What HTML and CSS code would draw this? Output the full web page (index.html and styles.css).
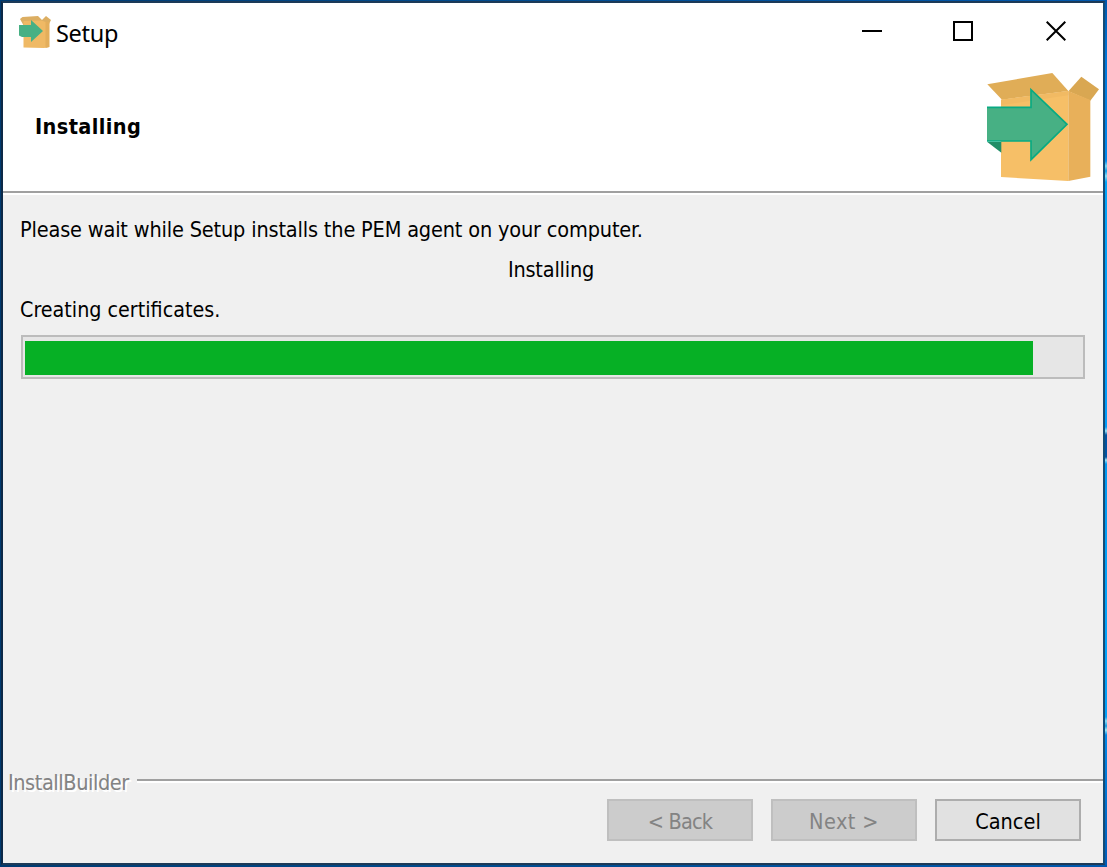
FILE: index.html
```html
<!DOCTYPE html>
<html lang="en">
<head>
<meta charset="utf-8">
<title>Setup</title>
<link rel="stylesheet" href="styles.css">
</head>
<body>
<div class="desktop">
  <main class="window">
    <header class="header">
      <div class="titlebar">
        <svg class="app-icon" viewBox="0 0 32 33">
          <path fill="#dcae62" d="M1 4 3.500 2 19 1 23 5 27 1 32 5 30 9V13H6z"/>
          <path fill="#efb965" d="M4.500 6 22 5.500 30 8V32L25 33 4.500 32.500z"/>
          <path fill="#e3ae5b" d="M26.500 6 30.500 7.500V32L26.500 33z"/>
          <path fill="#47b084" d="M0 10H12V5L24 16 12 27V22H3L0 20.500z"/>
        </svg>
        <span class="caption">Setup</span>
        <svg class="control minimize" viewBox="0 0 20 20"><path d="M0 10H20"/></svg>
        <svg class="control maximize" viewBox="0 0 20 20"><path d="M1 1H19V19H1z"/></svg>
        <svg class="control close" viewBox="0 0 20 20"><path d="M.7 .7 19.3 19.3M19.3 .7 .7 19.3"/></svg>
      </div>
      <div class="banner">
        <h1 class="heading">Installing</h1>
        <svg class="logo" viewBox="60 36 336 330" preserveAspectRatio="none">
          <path fill="#d9a752" d="M304 94 343 50 396 88 370 122z"/>
          <path fill="#f6bf67" d="M102 119 304 93V363L102 351z"/>
          <path fill="#e0ad57" d="M61 73 256 39 304 93 105 119z"/>
          <path fill="#f1ba63" d="M102 119 304 93V106L102 136z"/>
          <path fill="#e8b05a" d="M304 93 370 120V350L304 363z"/>
          <path fill="#208e68" d="M61 246H103V278z"/>
          <path fill="#47b084" d="M60 142H192V89L300 193 192 299V243H60z"/>
          <path fill="none" stroke="#08aa83" stroke-width="5" d="M60 142H192V89L300 193 192 299V243H60"/>
        </svg>
      </div>
    </header>
    <section class="content">
      <p class="line message">Please wait while Setup installs the PEM agent on your computer.</p>
      <p class="line stage">Installing</p>
      <p class="line task">Creating certificates.</p>
      <div class="progress"><div class="bar"></div></div>
    </section>
    <footer class="footer">
      <div class="divider"><span class="brand">InstallBuilder</span><span class="rule"></span></div>
      <div class="buttons">
        <button class="button" disabled><span class="back">&lt; Back</span></button>
        <button class="button" disabled><span class="next">Next &gt;</span></button>
        <button class="button"><span class="cancel">Cancel</span></button>
      </div>
    </footer>
  </main>
  <div class="edge"></div>
</div>
</body>
</html>
```
FILE: styles.css
```css
* { box-sizing: border-box; }
body {
  margin: 0;
  font-family: "DejaVu Sans Condensed", "DejaVu Sans", sans-serif;
  font-stretch: condensed;
  font-size: 21.5px;
  color: #000;
}
.desktop {
  display: flex;
  width: 1107px;
  height: 867px;
  padding: 1px 0 2px 1px;
  background: linear-gradient(90deg, #003a70, #004a8c 40%, #0058ae);
}
.window {
  display: flex;
  flex-direction: column;
  width: 1104px;
  height: 864px;
  border: 2px solid #1c3a58;
  border-left-color: #0c2947;
  border-right-color: #144b76;
  background: #f0f0f0;
}
.edge {
  width: 2px;
  height: 864px;
  background: linear-gradient(180deg, #0058ac 0, #0078dc 60px, #008aee 160px, #7cdcf8 165px, #0a9cec 170px, #8ce2fa 175px, #00a4f8 181px, #009cfa 426px, #9ce4fa 430px, #0054a4 434px, #0054a4 456px, #9ce4fa 459px, #0098f0 463px, #00a4fa 600px, #00a0f8 716px, #8cdef8 720px, #149ce4 725px, #9ceafa 729px, #0088e8 734px, #005cb8 864px);
}
.header {
  height: 190px;
  background: #fff;
  border-bottom: 2px solid #a0a0a0;
  box-shadow: 0 2px #fff;
}
.titlebar {
  display: flex;
  height: 57px;
  padding: 0 37px 0 16px;
}
.app-icon { width: 32px; height: 33px; margin-top: 12px; }
.caption {
  margin: 12px auto 0 5px;
  font-family: "Noto Sans", "Open Sans", sans-serif;
  font-stretch: normal;
  font-size: 23.5px;
  line-height: 37px;
  letter-spacing: -.3px;
}
.control {
  width: 20px;
  height: 20px;
  margin-top: 18px;
  fill: none;
  stroke: #000;
  stroke-width: 2;
}
.maximize { margin-left: 71px; }
.close { margin-left: 73px; }
.banner {
  display: flex;
  justify-content: space-between;
  padding: 12px 4px 0 32px;
}
.heading {
  margin: 42px 0 0;
  font-size: 21.5px;
  line-height: 26px;
  font-weight: bold;
  letter-spacing: .4px;
}
.logo { width: 112px; height: 110px; }
.content { flex: 1; padding: 24px 18px 0; }
.line { margin: 0 0 14px -1px; line-height: 26px; white-space: nowrap; }
.message { letter-spacing: -.16px; }
.stage { padding-right: 3px; text-align: center; letter-spacing: -.2px; }
.task { margin-bottom: 12px; font-size: 21.3px; }
.progress {
  height: 44px;
  padding: 4px 2px 2px;
  border: 2px solid #bcbcbc;
  background: #e6e6e6;
}
.bar { width: 1008px; height: 34px; background: #06b025; }
.footer { height: 96px; }
.divider { display: flex; height: 30px; padding-left: 5px; }
.brand {
  width: 129px;
  line-height: 32px;
  color: #838383;
  text-shadow: 2px 2px #fff;
  letter-spacing: -.42px;
}
.rule {
  flex: 1;
  height: 4px;
  margin-top: 12px;
  border-top: 2px solid #a0a0a0;
  border-bottom: 2px solid #fff;
}
.buttons {
  display: flex;
  justify-content: flex-end;
  gap: 18px;
  padding: 2px 22px 0 0;
}
.button {
  width: 146px;
  height: 42px;
  padding: 2px 0 0;
  border: 2px solid #adadad;
  background: #e1e1e1;
  color: #000;
  font: inherit;
}
.button:disabled { border-color: #bfbfbf; background: #ccc; color: #838383; }
.back { letter-spacing: -.8px; }
.next { letter-spacing: .4px; }
```
